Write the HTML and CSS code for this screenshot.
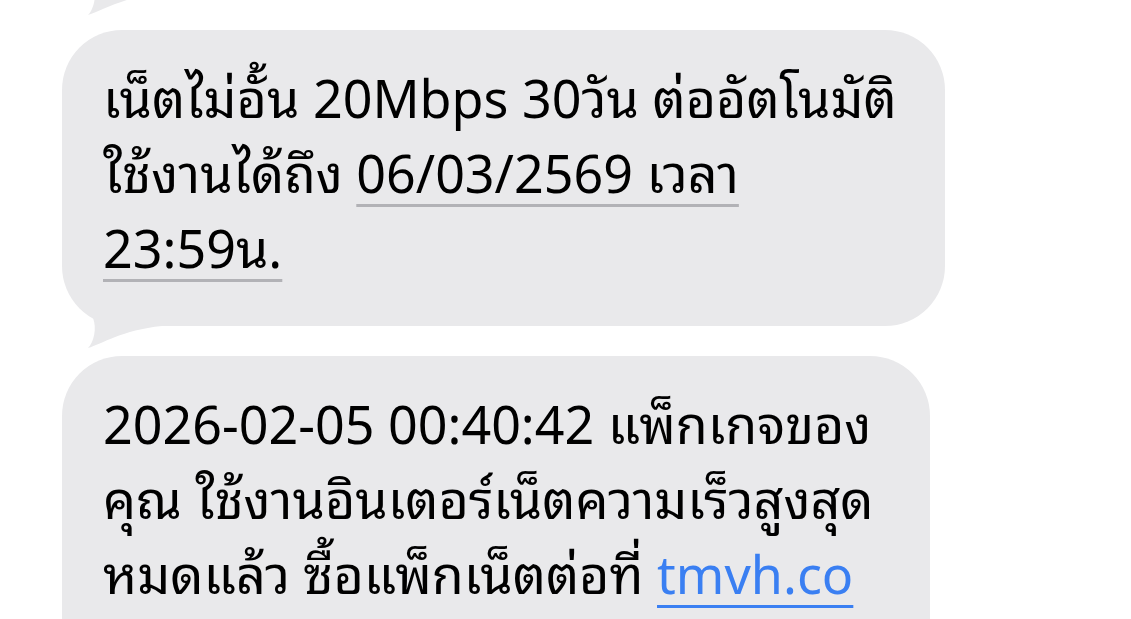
FILE: index.html
```html
<!DOCTYPE html>
<html lang="th">
<head>
    <meta charset="UTF-8">
    <title>Messages</title>
    <link rel="stylesheet" href="styles.css">
</head>
<body>
    <div class="thread">
        <div class="bubble prev">
            <svg class="tail" width="100" height="90" viewBox="0 0 100 90"><path d="M24 40 L31 52 C35 62 32 76 26 82 C40 78 60 64 100 60 L100 40 Z"/></svg>
        </div>

        <div class="bubble first">
            <p>เน็ตไม่อั้น 20Mbps 30วัน ต่ออัตโนมัติ<br>ใช้งานได้ถึง <span class="date">06/03/2569 เวลา<br>23:59น.</span></p>
            <svg class="tail" width="100" height="90" viewBox="0 0 100 90"><path d="M24 40 L31 52 C35 62 32 76 26 82 C40 78 60 64 100 60 L100 40 Z"/></svg>
        </div>

        <div class="bubble second">
            <p>2026-02-05 00:40:42 แพ็กเกจของ<br>คุณ ใช้งานอินเตอร์เน็ตความเร็วสูงสุด<br>หมดแล้ว ซื้อแพ็กเน็ตต่อที่ <a href="#" class="link">tmvh.co</a></p>
        </div>
    </div>
</body>
</html>
```

FILE: styles.css
```css
body {
    margin: 0;
    background: #ffffff;
    font-family: "Noto Sans Thai Looped", "Noto Sans Thai", "Noto Sans", sans-serif;
    overflow: hidden;
}
.thread {
    display: flex;
    flex-direction: column;
    align-items: flex-start;
    margin-top: -67px;
    padding-left: 62px;
}
.bubble {
    position: relative;
    box-sizing: border-box;
    background: #e9e9eb;
    border-radius: 60px;
    padding: 27px 30px 44px 41px;
    color: #000;
}
.bubble p {
    margin: 0;
    font-size: 52px;
    line-height: 75px;
    white-space: nowrap;
}
.prev {
    width: 520px;
    height: 60px;
    padding: 0;
    margin-bottom: 37px;
}
.first {
    width: 883px;
    margin-bottom: 30px;
}
.second {
    width: 868px;
    height: 330px;
}
.tail {
    position: absolute;
    left: 0;
    bottom: -30px;
    fill: #e9e9eb;
}
.date {
    text-decoration: underline;
    text-decoration-color: #b2b2b6;
    text-decoration-thickness: 3px;
    text-underline-offset: 11px;
}
.link {
    color: #3a7ff2;
    text-decoration: underline;
    text-decoration-thickness: 3px;
    text-underline-offset: 11px;
}
```
